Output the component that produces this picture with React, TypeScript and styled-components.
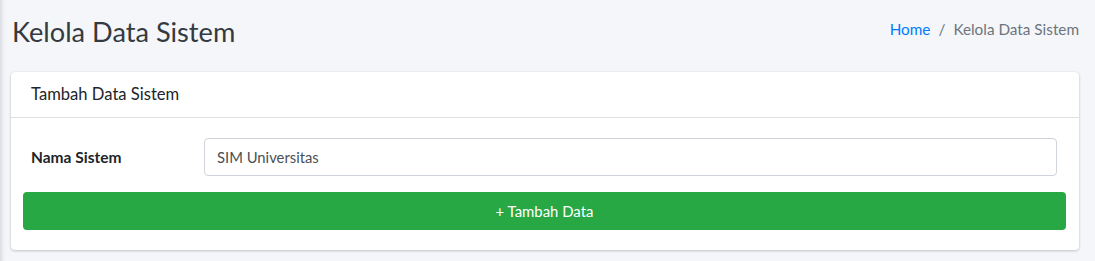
import React from "react";
import styled, { createGlobalStyle } from "styled-components";

const GlobalStyle = createGlobalStyle`
  html, body { margin: 0; padding: 0; }
  body {
    background: linear-gradient(to right, #d9dbde 0px, #eceef1 3px, #f4f6f9 6px) #f4f6f9;
    font-family: Lato, "Liberation Sans", sans-serif;
    color: #212529;
    min-height: 261px;
  }
`;

const Page = styled.div`
  padding: 15px 16px 0 11px;
`;

const HeaderRow = styled.div`
  display: flex;
  justify-content: space-between;
  align-items: flex-start;
  padding-bottom: 22px;
`;

const Title = styled.h1`
  margin: 0 0 0 1px;
  font-size: 27.2px;
  font-weight: 400;
  line-height: 34.5px;
  color: #343a40;
`;

const Crumbs = styled.ol`
  display: flex;
  list-style: none;
  margin: 0;
  padding: 0;
  font-size: 15.3px;
  line-height: 28.8px;
`;

const Crumb = styled.li<{ $active?: boolean }>`
  color: ${(p) => (p.$active ? "#6c757d" : "#007bff")};
  &:not(:first-child)::before {
    content: "/";
    color: #6c757d;
    padding: 0 8px;
  }
`;

const Card = styled.section`
  background: #fff;
  border-radius: 4px;
  box-shadow: 0 0 1px rgba(0, 0, 0, 0.125), 0 1px 3px rgba(0, 0, 0, 0.2);
`;

const CardHeader = styled.div`
  padding: 12px 20px;
  border-bottom: 1px solid rgba(0, 0, 0, 0.125);
`;

const CardTitle = styled.h3`
  margin: 0;
  font-size: 16.6px;
  font-weight: 400;
  line-height: 21px;
  color: #212529;
`;

const CardBody = styled.form`
  padding: 20px 13px 20px 12px;
  display: flex;
  flex-direction: column;
  gap: 16px;
`;

const FieldRow = styled.div`
  display: grid;
  grid-template-columns: 173px 1fr;
  align-items: center;
  padding: 0 9px 0 8px;
`;

const Label = styled.label`
  font-weight: 700;
  font-size: 15.5px;
  color: #212529;
`;

const Input = styled.input`
  height: 38px;
  box-sizing: border-box;
  border: 1px solid #ced4da;
  border-radius: 4px;
  padding: 6px 12px;
  font-family: inherit;
  font-size: 14.8px;
  color: #495057;
  background: #fff;
  outline: none;
`;

const Button = styled.button`
  height: 38px;
  border: none;
  border-radius: 4px;
  background: #28a745;
  color: #fff;
  font-family: inherit;
  font-size: 14.9px;
  cursor: pointer;
`;

export default function App() {
  return (
    <>
      <GlobalStyle />
      <Page>
        <HeaderRow>
          <Title>Kelola Data Sistem</Title>
          <Crumbs>
            <Crumb>Home</Crumb>
            <Crumb $active>Kelola Data Sistem</Crumb>
          </Crumbs>
        </HeaderRow>
        <Card>
          <CardHeader>
            <CardTitle>Tambah Data Sistem</CardTitle>
          </CardHeader>
          <CardBody onSubmit={(e) => e.preventDefault()}>
            <FieldRow>
              <Label htmlFor="nama">Nama Sistem</Label>
              <Input id="nama" defaultValue="SIM Universitas" />
            </FieldRow>
            <Button type="submit">+ Tambah Data</Button>
          </CardBody>
        </Card>
      </Page>
    </>
  );
}
